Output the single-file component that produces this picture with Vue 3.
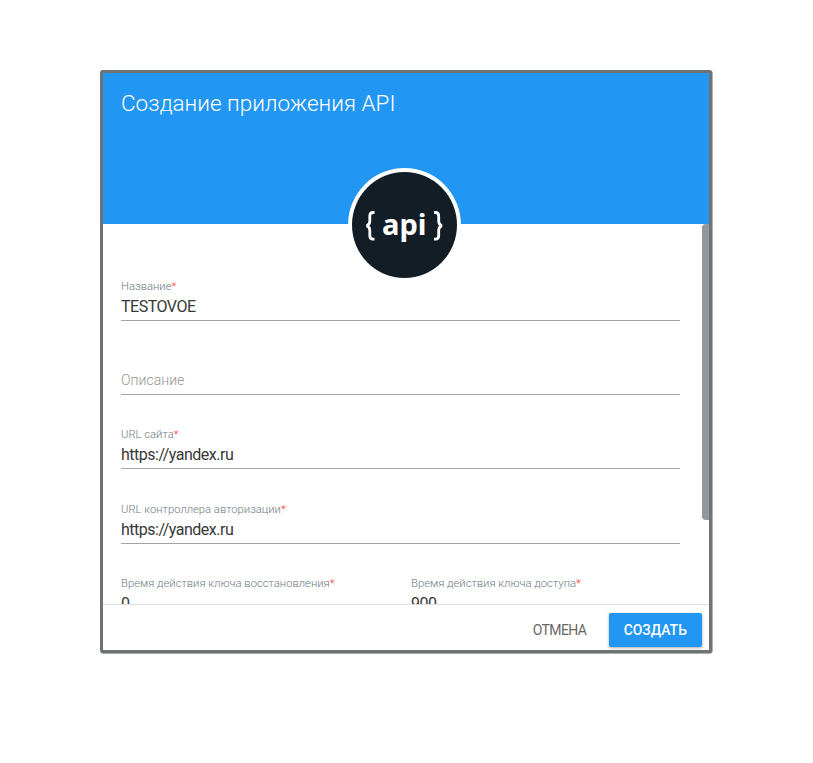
<script setup>
const fields = [
  { label: 'Название', value: 'TESTOVOE', required: true },
  { label: 'Описание', value: '', required: false },
  { label: 'URL сайта', value: 'https://yandex.ru', required: true },
  { label: 'URL контроллера авторизации', value: 'https://yandex.ru', required: true },
]
const times = [
  { label: 'Время действия ключа восстановления', value: '0' },
  { label: 'Время действия ключа доступа', value: '900' },
]
</script>

<template>
  <main class="page">
    <section class="dialog">
      <header class="header">
        <h1>Создание приложения API</h1>
        <div class="logo">
          <svg viewBox="0 0 105 106" role="img" aria-label="api">
            <g fill="none" stroke="#fff" stroke-width="2.8">
              <path d="M22.5 40.5h-1.5q-3.200 0-3.200 3.600v5q0 4-3.300 4.700q3.300.7 3.300 4.700v5q0 3.600 3.200 3.600h1.500" />
              <path d="M82 40.5h1.5q3.200 0 3.200 3.600v5q0 4 3.300 4.700q-3.300.7-3.300 4.700v5q0 3.600-3.200 3.600H82" />
            </g>
            <text x="30" y="63" textLength="44.5" lengthAdjust="spacingAndGlyphs">api</text>
          </svg>
        </div>
      </header>
      <div class="content">
        <form class="form">
          <div v-for="f in fields" :key="f.label" class="field">
            <label v-if="f.value">{{ f.label }}<i v-if="f.required">*</i></label>
            <div v-if="f.value" class="value">{{ f.value }}</div>
            <div v-else class="placeholder">{{ f.label }}</div>
          </div>
          <div class="row">
            <div v-for="t in times" :key="t.label" class="field">
              <label>{{ t.label }}<i>*</i></label>
              <div class="value">{{ t.value }}</div>
            </div>
          </div>
        </form>
        <div class="scrollbar"></div>
      </div>
      <footer class="footer">
        <button class="cancel" type="button">ОТМЕНА</button>
        <button class="create" type="button">СОЗДАТЬ</button>
      </footer>
    </section>
  </main>
</template>

<style>
body { margin: 0; background: #fff; }
</style>

<style scoped>
.page {
  box-sizing: border-box;
  height: 763px;
  padding: 70px 0 0 100px;
  font-family: Roboto, "Liberation Sans", sans-serif;
  overflow: hidden;
}
.dialog {
  box-sizing: border-box;
  display: flex;
  flex-direction: column;
  width: 612px;
  height: 583px;
  border: 3px solid #707374;
  border-radius: 3px;
  background: #fff;
  box-shadow: 0.5px 0.5px 0 0.2px #8d9091;
}
.header {
  position: relative;
  flex: 0 0 151px;
  background: #2196f3;
}
h1 {
  margin: 0;
  padding: 16px 0 0 18px;
  color: #fff;
  font-size: 22.5px;
  font-weight: 300;
  line-height: 28px;
  white-space: nowrap;
}
.logo {
  position: absolute;
  z-index: 1;
  left: 245px;
  top: 95px;
  width: 105px;
  height: 106px;
  border: 4px solid #fff;
  border-radius: 50%;
  background: #131d25;
}
.logo svg { display: block; width: 105px; height: 106px; }
.logo text {
  fill: #fff;
  font: 700 29px "Noto Sans", sans-serif;
}
.content {
  display: flex;
  justify-content: space-between;
  flex: 0 0 380px;
  overflow: hidden;
}
.form {
  width: 559px;
  padding: 55px 0 0 18px;
}
.field {
  box-sizing: border-box;
  height: 42px;
  margin-bottom: 32.2px;
  border-bottom: 1px solid #a4a4a4;
}
label {
  display: block;
  color: #6c7a83;
  font-size: 11.25px;
  font-weight: 300;
  line-height: 15px;
  white-space: nowrap;
}
i { color: #ff3b30; font-style: normal; }
.value {
  padding-top: 2px;
  color: #383838;
  font-size: 16px;
  letter-spacing: -.5px;
  line-height: 21px;
}
.placeholder {
  padding-top: 17px;
  color: #959595;
  font-size: 14.1px;
  font-weight: 300;
  line-height: 20px;
}
.row { display: grid; grid-template-columns: 268px 268px; gap: 22px; }
.scrollbar {
  width: 7px;
  height: 296px;
  border-radius: 4px 0 0 4px;
  background: #92989b;
}
.footer {
  box-sizing: border-box;
  display: flex;
  flex: 1;
  justify-content: flex-end;
  align-items: flex-start;
  padding: 8px 7px 0 0;
  border-top: 1px solid #e0e0e0;
}
button {
  height: 34px;
  padding: 0;
  border: 0;
  background: none;
  font: 400 14px Roboto, sans-serif;
  letter-spacing: -.6px;
  white-space: nowrap;
}
.cancel { width: 98px; color: #666; }
.create {
  width: 93.5px;
  border-radius: 2px;
  background: #2196f3;
  color: #fff;
  font-size: 13.9px;
  font-weight: 500;
  letter-spacing: 0;
  box-shadow: 0 1px 3px rgba(0, 0, 0, .35);
}
</style>
